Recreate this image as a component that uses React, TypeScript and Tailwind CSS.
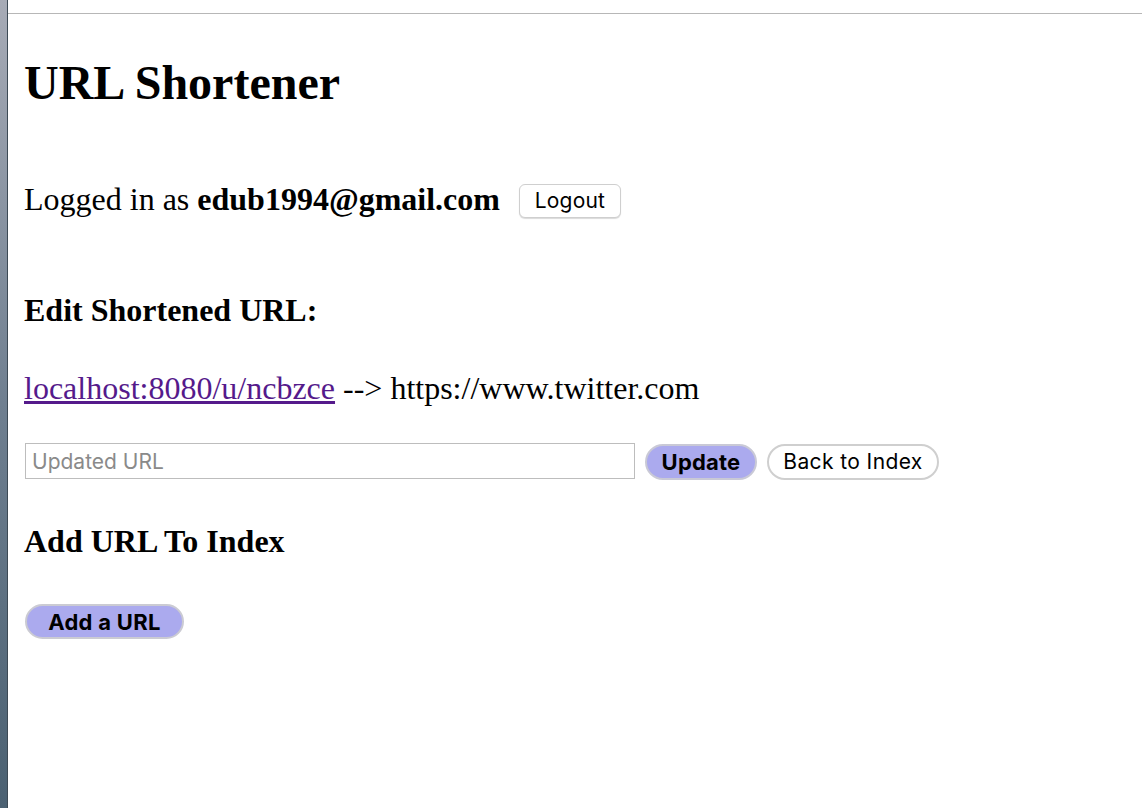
import React, { useState } from 'react';

const serif = "font-['Liberation_Serif','Times_New_Roman',serif]";
const sans = "font-['Inter','Liberation_Sans',Arial,sans-serif]";

export default function App() {
  const [updatedUrl, setUpdatedUrl] = useState('');

  return (
    <div className="flex min-h-[808px] w-full bg-white text-black">
      {/* desktop peeking in at the window edge */}
      <div className="w-[8px] shrink-0 border-r border-[#3d4a55] bg-gradient-to-b from-[#a7abb6] via-[#6f7f90] to-[#4b6172]" />

      <div className="flex flex-1 flex-col">
        <div className="h-[13px] shrink-0 bg-white" />
        <div className="h-px shrink-0 bg-[#b7b7b7]" />

        <main className={`${serif} pl-[16px]`}>
          <h1 className="mt-[45px] text-[48px] font-bold leading-[48px]">URL Shortener</h1>

          <div className="mt-[76px] flex items-start">
            <p className="text-[32px] leading-[32px]">
              Logged in as <b>edub1994@gmail.com</b>
            </p>
            <button
              className={`${sans} ml-[19px] mt-[1px] h-[34px] w-[102px] rounded-[6px] border border-[#cfcfcf] bg-white text-[21px] tracking-[0.2px] shadow-[0_1px_1px_rgba(0,0,0,0.15)]`}
            >
              Logout
            </button>
          </div>

          <h3 className="mt-[76px] text-[32px] font-bold leading-[32px]">Edit Shortened URL:</h3>

          <p className="mt-[46px] text-[32px] leading-[32px]">
            <a href="#" className="text-[#551a8b] underline">localhost:8080/u/ncbzce</a> --&gt; https://www.twitter.com
          </p>

          <div className="mt-[39px] flex items-start pl-px">
            <input
              type="text"
              value={updatedUrl}
              onChange={function (e) { setUpdatedUrl(e.target.value); }}
              placeholder="Updated URL"
              className={`${sans} h-[36px] w-[610px] border border-[#bdbdbd] px-[6px] text-[21px] placeholder:text-[#8a8a8a] outline-none`}
            />
            <button
              className={`${sans} ml-[10px] mt-[1px] h-[36px] w-[112px] rounded-full border-2 border-[#c9c9d6] bg-[#abaaee] text-[22px] font-bold tracking-[0.2px]`}
            >
              Update
            </button>
            <button
              className={`${sans} ml-[10px] mt-[1px] h-[36px] w-[172px] rounded-full border-2 border-[#cfcfcf] bg-white text-[21px] tracking-[0.4px]`}
            >
              Back to Index
            </button>
          </div>

          <h3 className="mt-[45px] text-[32px] font-bold leading-[32px]">Add URL To Index</h3>

          <button
            className={`${sans} ml-px mt-[47px] h-[35px] w-[159px] rounded-full border-2 border-[#cbcbd3] bg-[#abaaee] text-[22px] font-bold tracking-[0.3px]`}
          >
            Add a URL
          </button>
        </main>
      </div>
    </div>
  );
}
